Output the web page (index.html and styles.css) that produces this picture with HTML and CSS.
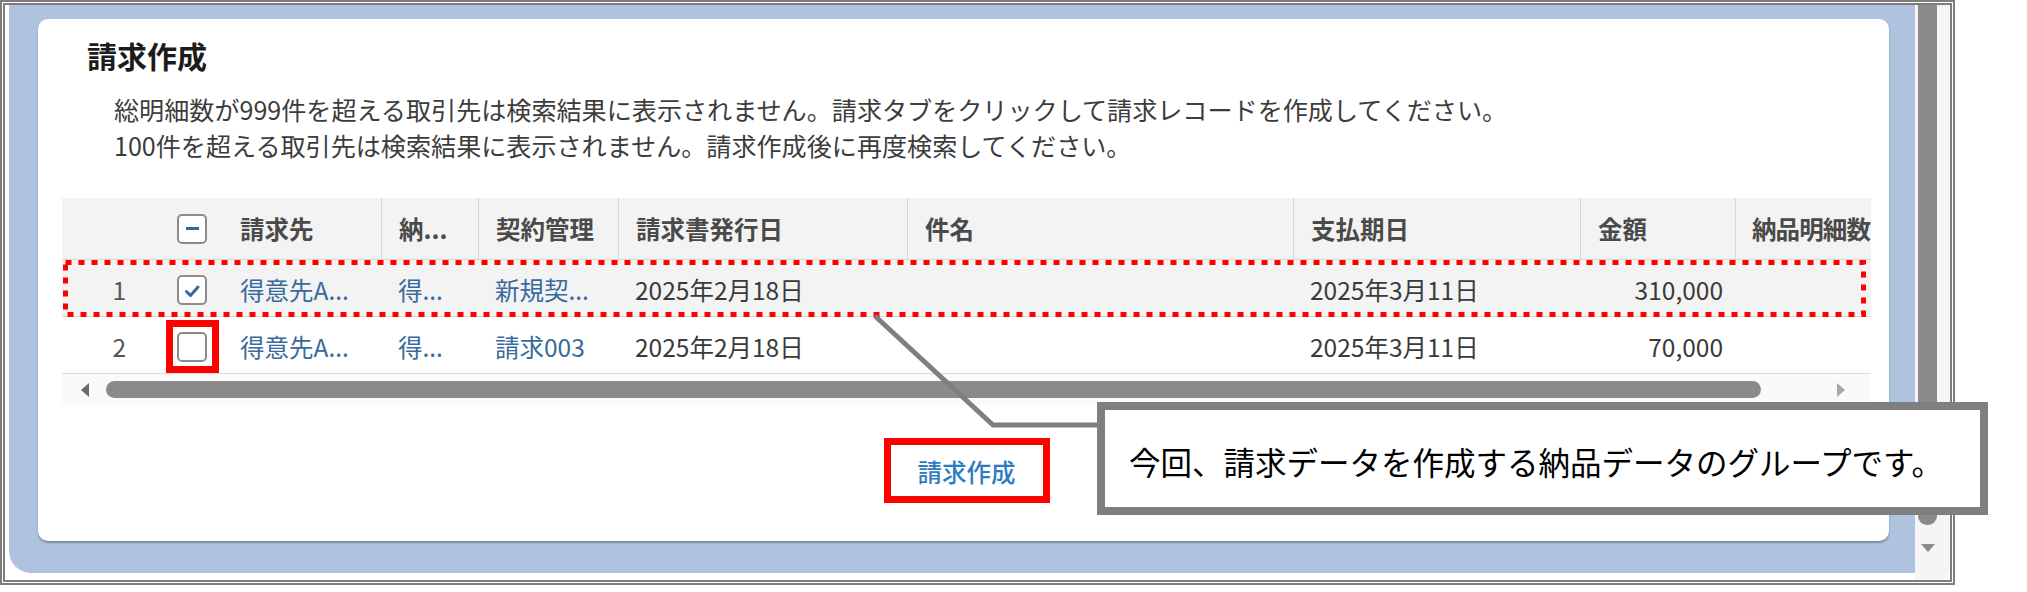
FILE: index.html
```html
<!DOCTYPE html>
<html lang="ja">
<head>
<meta charset="utf-8">
<title>請求作成</title>
<link rel="stylesheet" href="styles.css">
</head>
<body>
<div class="frame">
  <div class="viewport">
    <div class="backdrop">
      <section class="card">
        <h1 class="title">請求作成</h1>
        <p class="note">総明細数が999件を超える取引先は検索結果に表示されません。請求タブをクリックして請求レコードを作成してください。<br>100件を超える取引先は検索結果に表示されません。請求作成後に再度検索してください。</p>
        <div class="table">
          <div class="row head">
            <div class="cell num"></div>
            <div class="cell chk"><span class="box"><span class="dash"></span></span></div>
            <div class="cell">請求先</div>
            <div class="cell sep">納...</div>
            <div class="cell sep">契約管理</div>
            <div class="cell sep">請求書発行日</div>
            <div class="cell sep">件名</div>
            <div class="cell sep">支払期日</div>
            <div class="cell sep">金額</div>
            <div class="cell sep last">納品明細数</div>
          </div>
          <div class="row body selected">
            <div class="cell num">1</div>
            <div class="cell chk"><span class="box"><svg class="tick" viewBox="0 0 26 26"><polyline points="7.5,14.5 11.5,18.5 19,10" /></svg></span></div>
            <div class="cell link">得意先A...</div>
            <div class="cell link">得...</div>
            <div class="cell link">新規契...</div>
            <div class="cell">2025年2月18日</div>
            <div class="cell"></div>
            <div class="cell">2025年3月11日</div>
            <div class="cell amount">310,000</div>
            <div class="cell"></div>
          </div>
          <div class="row body">
            <div class="cell num">2</div>
            <div class="cell chk"><span class="box"><span class="ring"></span></span></div>
            <div class="cell link">得意先A...</div>
            <div class="cell link">得...</div>
            <div class="cell link">請求003</div>
            <div class="cell">2025年2月18日</div>
            <div class="cell"></div>
            <div class="cell">2025年3月11日</div>
            <div class="cell amount">70,000</div>
            <div class="cell"></div>
          </div>
          <div class="hscroll">
            <span class="arrow-left"></span>
            <span class="hthumb"></span>
            <span class="arrow-right"></span>
          </div>
          <svg class="dotted" width="1809" height="58" viewBox="0 0 1809 58"><rect x="3.5" y="2.5" width="1798" height="52" /></svg>
        </div>
        <div class="actions">
          <span class="mark"><button class="btn" type="button">請求作成</button></span>
        </div>
      </section>
    </div>
  </div>
  <div class="vscroll">
    <div class="vthumb"></div>
    <div class="vdown"></div>
  </div>
</div>
<svg class="connector" width="2027" height="592" viewBox="0 0 2027 592"><polyline points="875,316 993,425 1100,425" /></svg>
<div class="callout">今回、請求データを作成する納品データのグループです。</div>
</body>
</html>
```

FILE: styles.css
```css
* { box-sizing: border-box; }

html, body {
  margin: 0;
  padding: 0;
  background: #ffffff;
}

body {
  width: 2027px;
  height: 592px;
  position: relative;
  overflow: hidden;
  font-family: "Noto Sans CJK JP", "Noto Sans", sans-serif;
  color: #333333;
}

.frame {
  width: 1955px;
  height: 585px;
  border: 5px double #7d7d7d;
  display: flex;
  background: #ffffff;
}

.viewport {
  width: 1910px;
  height: 100%;
  padding: 0 0 7px 4px;
  background: #ffffff;
}

.backdrop {
  height: 100%;
  background: #afc3de;
  padding: 14px 26px 32px 29px;
  border-bottom-left-radius: 22px;
}

.card {
  background: #ffffff;
  border-radius: 10px;
  box-shadow: 0 2px 2px rgba(0, 0, 0, 0.28);
  padding: 18px 18px 38px 24px;
}

.title {
  margin: 0 0 0 25px;
  font-size: 30px;
  line-height: 36px;
  font-weight: 700;
  color: #1c1c1c;
}

.note {
  margin: 17.5px 0 0 52px;
  font-size: 25.1px;
  line-height: 36.5px;
  color: #3c3c3c;
}

.table {
  position: relative;
  margin-top: 34.5px;
  width: 1809px;
  overflow: hidden;
}

.row {
  display: grid;
  grid-template-columns: 80px 81px 158px 97px 140px 289px 386px 287px 155px 136px;
  width: 1809px;
}

.row.head {
  height: 62px;
  background: #f3f3f3;
  border-bottom: 1px solid #d4d4d4;
  font-weight: 700;
  color: #4a4a4a;
}

.row.body {
  height: 57px;
  padding-top: 3px;
  border-bottom: 1px solid #dcdcdc;
  color: #3a3a3a;
}

.row.selected {
  background: #f3f3f3;
}

.cell {
  display: flex;
  align-items: center;
  padding-left: 17px;
  font-size: 24.5px;
  white-space: nowrap;
  overflow: hidden;
}

.cell.sep {
  border-left: 1px solid #d6d6d6;
}

.cell.last {
  letter-spacing: -0.9px;
  padding-left: 16px;
}

.cell.num {
  justify-content: flex-end;
  padding-left: 0;
  padding-right: 16px;
  color: #555555;
}

.cell.chk {
  padding-left: 35px;
  overflow: visible;
}

.cell.link {
  color: #396a9e;
}

.cell.amount {
  justify-content: flex-end;
  padding-right: 12px;
}

.box {
  position: relative;
  width: 30px;
  height: 30px;
  border: 2px solid #8c8c8c;
  border-radius: 5px;
  background: #ffffff;
  display: flex;
  align-items: center;
  justify-content: center;
}

.dash {
  width: 13px;
  height: 3px;
  background: #2d6aa0;
}

.tick {
  width: 26px;
  height: 26px;
}

.tick polyline {
  fill: none;
  stroke: #2d6aa0;
  stroke-width: 3;
  stroke-linecap: round;
  stroke-linejoin: round;
}

.ring {
  position: absolute;
  left: -13px;
  top: -14px;
  width: 53px;
  height: 53px;
  border: 7px solid #ff0000;
}

.hscroll {
  height: 31px;
  display: flex;
  align-items: center;
  padding-left: 19px;
  background: #fafafa;
}

.arrow-left {
  width: 0;
  height: 0;
  border-top: 7px solid transparent;
  border-bottom: 7px solid transparent;
  border-right: 8px solid #6a6a6a;
}

.hthumb {
  margin-left: 17px;
  width: 1655px;
  height: 17px;
  border-radius: 9px;
  background: #8a8a8a;
}

.arrow-right {
  margin-left: 76px;
  width: 0;
  height: 0;
  border-top: 7px solid transparent;
  border-bottom: 7px solid transparent;
  border-left: 8px solid #a8a8a8;
}

.dotted {
  position: absolute;
  left: 0;
  top: 62px;
}

.dotted rect {
  fill: none;
  stroke: #ff0000;
  stroke-width: 5;
  stroke-dasharray: 6 7;
}

.actions {
  margin-top: 33px;
  display: flex;
  justify-content: center;
}

.mark {
  display: inline-flex;
  border: 7px solid #ff0000;
}

.btn {
  margin: 0;
  border: none;
  background: #ffffff;
  font-family: "Noto Sans CJK JP", "Noto Sans", sans-serif;
  font-size: 24.5px;
  font-weight: 500;
  color: #2e7cc0;
  height: 51px;
  padding: 2px 27px 0 27px;
  line-height: 49px;
}

.vscroll {
  width: 35px;
  height: 100%;
  background: #f5f5f5;
  border-bottom-right-radius: 12px;
  display: flex;
  flex-direction: column;
}

.vthumb {
  margin-left: 3px;
  width: 19px;
  height: 520px;
  background: #8a8a8a;
  border-radius: 0 0 9px 9px;
}

.vdown {
  margin: 19px 0 0 6px;
  width: 0;
  height: 0;
  border-left: 7px solid transparent;
  border-right: 7px solid transparent;
  border-top: 8px solid #8a8a8a;
}

.connector {
  position: absolute;
  left: 0;
  top: 0;
  pointer-events: none;
}

.connector polyline {
  fill: none;
  stroke: #7f7f7f;
  stroke-width: 5;
  stroke-linejoin: miter;
}

.callout {
  position: absolute;
  left: 1097px;
  top: 402px;
  width: 891px;
  height: 113px;
  border: 8px solid #7f7f7f;
  background: #ffffff;
  display: flex;
  align-items: center;
  padding: 4px 0 0 24px;
  font-size: 31.5px;
  color: #000000;
  white-space: nowrap;
}
```
